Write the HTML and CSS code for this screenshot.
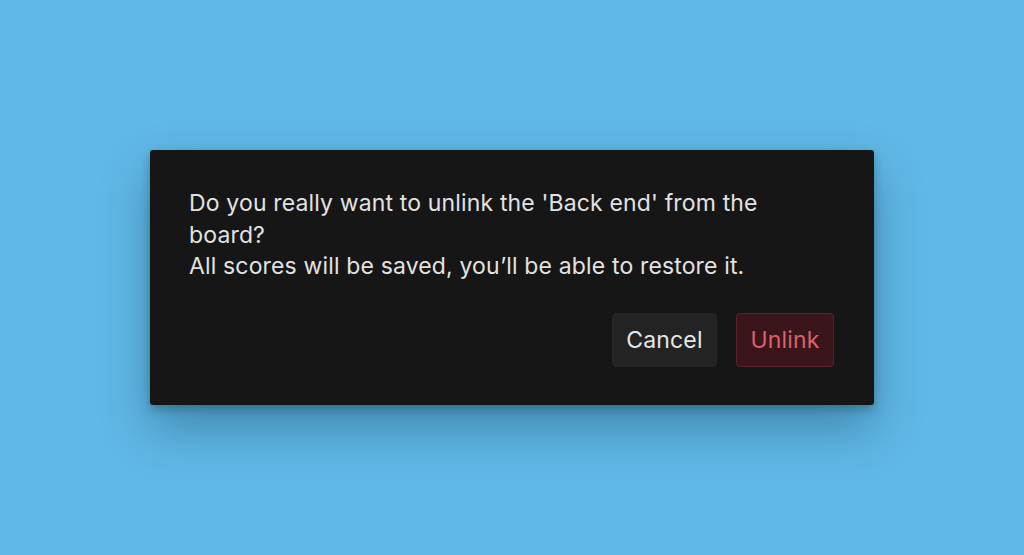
FILE: index.html
```html
<!DOCTYPE html>
<html lang="en">
<head>
<meta charset="UTF-8">
<meta name="viewport" content="width=device-width, initial-scale=1.0">
<title>Unlink</title>
<link rel="stylesheet" href="styles.css">
</head>
<body>
<div class="dialog">
  <p class="message">Do you really want to unlink the 'Back end' from the board?<br>All scores will be saved, you’ll be able to restore it.</p>
  <div class="actions">
    <button class="btn btn-cancel">Cancel</button>
    <button class="btn btn-danger">Unlink</button>
  </div>
</div>
</body>
</html>
```

FILE: styles.css
```css
body {
  display: flex;
  justify-content: center;
  align-items: center;
  height: 100vh;
  margin: 0;
  background: #60b8e6;
  font-family: Inter, 'Noto Sans', sans-serif;
  overflow: hidden;
}
.dialog {
  width: 724px;
  height: 255px;
  box-sizing: border-box;
  padding: 38px 40px 38px 39px;
  background: #161616;
  border-radius: 3px;
  box-shadow: 0 24px 48px rgba(10, 50, 80, 0.35), 0 4px 10px rgba(0, 0, 0, 0.25);
  display: flex;
  flex-direction: column;
}
.message {
  margin: 0;
  width: 610px;
  font-size: 23px;
  letter-spacing: 0.15px;
  line-height: 31.5px;
  color: #e2e2e2;
}
.actions {
  display: flex;
  justify-content: flex-end;
  gap: 19px;
  margin-top: auto;
}
.btn {
  height: 54px;
  padding: 0;
  border-radius: 4px;
  font-family: inherit;
  font-size: 23px;
  letter-spacing: 0.15px;
  cursor: pointer;
}
.btn-cancel {
  width: 105px;
  background: #232323;
  border: 1px solid #262626;
  color: #e6e6e6;
}
.btn-danger {
  width: 98px;
  background: #3a151a;
  border: 1px solid #5a2229;
  color: #dc606c;
}
```
